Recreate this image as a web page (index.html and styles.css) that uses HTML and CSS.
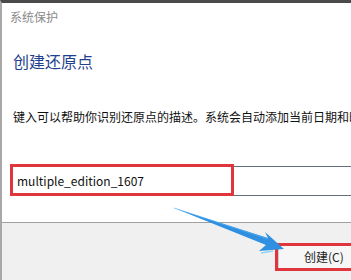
FILE: index.html
```html
<!DOCTYPE html>
<html lang="zh">
<head>
<meta charset="utf-8">
<link rel="stylesheet" href="styles.css">
</head>
<body>
<div class="window">
  <div class="main">
    <div class="title">系统保护</div>
    <h1 class="heading">创建还原点</h1>
    <p class="desc">键入可以帮助你识别还原点的描述。系统会自动添加当前日期和时</p>
    <div class="field">
      <div class="input">multiple_edition_1607</div>
      <div class="mark mark-input"></div>
    </div>
  </div>
  <div class="footer">
    <div class="btn-wrap">
      <button class="btn">创建(C)</button>
      <div class="mark mark-btn"></div>
    </div>
  </div>
  <svg class="arrow" width="120" height="50" viewBox="0 0 120 50">
    <path d="M1 2 L95 32 L92 26 L111 43 L86 45 L93 39 Z" fill="#2f8fe0"/>
    <path d="M1 2 L95 33" stroke="#5ab4f5" stroke-width="1" opacity="0.6"/>
    <path d="M88 47 L100 45" stroke="#8fd2f8" stroke-width="1.5"/>
  </svg>
</div>
</body>
</html>
```

FILE: styles.css
```css
html, body {
  margin: 0;
  padding: 0;
  background: #ffffff;
}
body {
  width: 351px;
  height: 280px;
  overflow: hidden;
  font-family: "Noto Sans CJK SC", "Microsoft YaHei", sans-serif;
}
.window {
  position: relative;
  width: 351px;
  height: 280px;
  border-top: 3px solid #4a4a4a;
  border-left: 2px solid #a8a8a8;
  box-sizing: border-box;
  display: flex;
  flex-direction: column;
  overflow: hidden;
}
.main {
  flex: 0 0 219px;
  background: #ffffff;
  padding-left: 8px;
  box-sizing: border-box;
  overflow: hidden;
}
.title {
  margin-top: 6px;
  font-size: 12px;
  line-height: 16px;
  color: #8a8a8a;
}
.heading {
  margin: 25px 0 0 3px;
  font-size: 16px;
  line-height: 22px;
  font-weight: normal;
  color: #1f3f8f;
}
.desc {
  margin: 37px 0 0 3px;
  font-size: 12px;
  line-height: 16px;
  color: #111111;
  white-space: nowrap;
}
.field {
  position: relative;
  margin-top: 41px;
}
.input {
  height: 28px;
  border-top: 1px solid #5f6f7d;
  border-bottom: 1px solid #5f6f7d;
  margin-right: -10px;
  padding-left: 7px;
  font-size: 12px;
  line-height: 27px;
  color: #111111;
  font-family: "Noto Sans CJK SC", "Open Sans", sans-serif;
}
.mark {
  position: absolute;
  border: 3px solid #e0353d;
  box-sizing: border-box;
}
.mark-input {
  left: 0;
  top: -2px;
  width: 224px;
  height: 32px;
}
.footer {
  flex: 1;
  background: #f0f0f0;
  border-top: 1px solid #a0a0a0;
  display: flex;
  justify-content: flex-end;
  padding-top: 20px;
}
.btn-wrap {
  position: relative;
  width: 76px;
  height: 28px;
}
.btn {
  width: 90px;
  height: 24px;
  margin: 2px 0 0 3px;
  background: #f6f6f6;
  border: 1px solid #cfcfcf;
  font-family: "Noto Sans CJK SC", sans-serif;
  font-size: 12px;
  color: #222222;
  padding: 0 0 0 0;
  text-align: left;
  text-indent: 25px;
  line-height: 20px;
}
.mark-btn {
  left: 0;
  top: 0;
  width: 90px;
  height: 28px;
}
.arrow {
  position: absolute;
  left: 171px;
  top: 203px;
}
```
